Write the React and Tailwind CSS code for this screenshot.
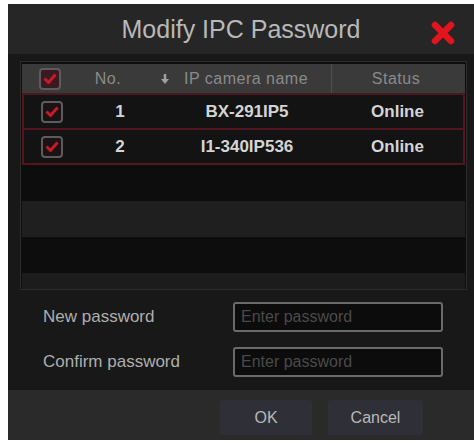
import React from "react";

const cameras = [
  { no: 1, name: "BX-291IP5", status: "Online" },
  { no: 2, name: "I1-340IP536", status: "Online" },
];

const CheckBox = ({ header }) => (
  <div
    className={`w-[22px] h-[22px] rounded-[4px] border-2 border-[#5c5c5c] flex items-center justify-center ${
      header ? "bg-[#3a1a20]" : "bg-[#1a1214]"
    }`}
  >
    <svg width="14" height="12" viewBox="0 0 14 12">
      <path d="M1.5 5.5 L5.5 9.5 L12.5 1.5" fill="none" stroke="#c81a28" strokeWidth="3" strokeLinejoin="round" />
    </svg>
  </div>
);

const CloseIcon = () => (
  <svg width="26" height="24" viewBox="0 0 26 24">
    <path d="M5 4 L21 20 M21 4 L5 20" stroke="#e3141e" strokeWidth="6.5" strokeLinecap="round" />
  </svg>
);

const SortArrow = () => (
  <svg width="10" height="12" viewBox="0 0 10 12">
    <path d="M5 1 V8" stroke="#a0a0a0" strokeWidth="2.5" />
    <path d="M1 6 L5 11 L9 6 Z" fill="#a0a0a0" />
  </svg>
);

const PasswordRow = ({ label }) => (
  <div className="flex items-center h-[30px]">
    <span className="w-[225px] pl-[35px] text-[17px] text-[#aeaeae]">{label}</span>
    <div className="w-[210px] h-full rounded-[3px] border-2 border-[#6a6a6a] bg-[#0c0c0c] flex items-center px-[6px]">
      <span className="text-[16px] text-[#4a4a4a]">Enter password</span>
    </div>
  </div>
);

export default function App() {
  return (
    <div className="w-[474px] h-[443px] bg-white pt-[4px] pl-[8px] font-['Liberation_Sans',Arial,sans-serif]">
      <div className="w-[466px] h-[436px] flex flex-col bg-[#181818]">
        {/* title bar */}
        <div className="relative h-[50px] bg-[#262626] flex items-center justify-center">
          <span className="text-[25px] text-[#b8b8b8] leading-none">Modify IPC Password</span>
          <div className="absolute right-[18px] top-[17px]">
            <CloseIcon />
          </div>
        </div>

        {/* camera table */}
        <div className="mt-[7px] ml-[12px] w-[447px] h-[229px] bg-[#0e0e0e] border border-[#2c2c2c] pt-[2px] px-[1px] flex flex-col">
          <div className="h-[29px] bg-[#3a3a3a] flex items-center text-[16px] tracking-[0.5px] text-[#8a8a8a] border-b-2 border-[#4a1820] box-content">
            <div className="w-[56px] flex justify-center">
              <CheckBox header />
            </div>
            <div className="w-[60px] text-center">No.</div>
            <div className="w-[194px] h-full flex items-center gap-[14px] pl-[22px] border-r border-[#4e4e4e]">
              <SortArrow />
              <span>IP camera name</span>
            </div>
            <div className="flex-1 text-center pr-[5px]">Status</div>
          </div>

          {cameras.map((cam) => (
            <div
              key={cam.no}
              className="h-[35px] bg-[#131313] border-2 border-t-0 border-[#541520] flex items-center text-[17px] font-bold text-[#d4d4d4]"
            >
              <div className="w-[56px] flex justify-center">
                <CheckBox />
              </div>
              <div className="w-[60px] pl-[20px] text-center">{cam.no}</div>
              <div className="w-[214px] text-center">{cam.name}</div>
              <div className="flex-1 text-center pr-[22px]">{cam.status}</div>
            </div>
          ))}

          <div className="h-[36px] bg-[#0d0d0d]" />
          <div className="h-[36px] bg-[#1f1f1f]" />
          <div className="h-[36px] bg-[#0d0d0d]" />
          <div className="flex-1 bg-[#1c1c1c]" />
        </div>

        {/* password fields */}
        <div className="pt-[12px] pb-[13px] flex flex-col gap-[15px]">
          <PasswordRow label="New password" />
          <PasswordRow label="Confirm password" />
        </div>

        {/* footer */}
        <div className="flex-1 bg-[#2a2a2a] flex items-start pt-[10px] pl-[212px] gap-[16px]">
          <button className="w-[92px] h-[35px] rounded-[3px] bg-[#2f3037] text-[16px] text-[#b8b8b8]">OK</button>
          <button className="w-[95px] h-[35px] rounded-[3px] bg-[#2f3037] text-[16px] text-[#b8b8b8]">Cancel</button>
        </div>
      </div>
    </div>
  );
}
